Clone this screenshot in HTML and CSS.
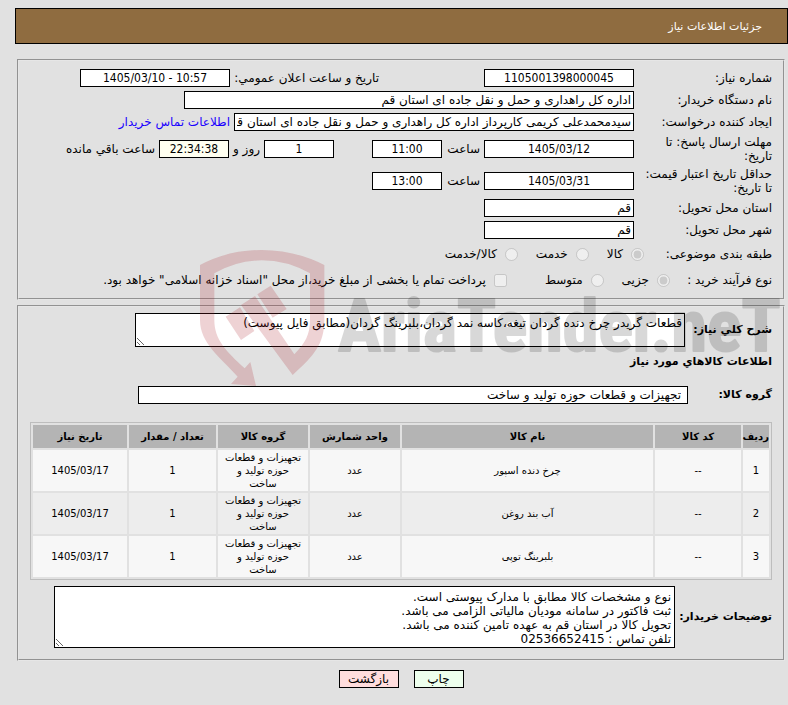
FILE: index.html
```html
<!DOCTYPE html>
<html lang="fa" dir="rtl">
<head>
<meta charset="utf-8">
<title>جزئیات اطلاعات نیاز</title>
<link rel="stylesheet" href="styles.css">
</head>
<body>
<header class="title-bar"><h1>جزئیات اطلاعات نیاز</h1></header>
<main>
<section class="panel summary">
  <div class="row">
    <label class="name" for="need-no">شماره نیاز:</label>
    <input class="field date" id="need-no" value="1105001398000045" readonly>
    <label class="announce" for="announce">تاريخ و ساعت اعلان عمومي:</label>
    <input class="field date" id="announce" dir="ltr" value="1405/03/10 - 10:57" readonly>
  </div>
  <div class="row">
    <label class="name" for="org">نام دستگاه خریدار:</label>
    <input class="field org" id="org" value="اداره کل راهداری و حمل و نقل جاده ای استان قم" readonly>
  </div>
  <div class="row">
    <label class="name" for="creator">ایجاد کننده درخواست:</label>
    <input class="field creator" id="creator" value="سیدمحمدعلی کریمی کارپرداز اداره کل راهداری و حمل و نقل جاده ای استان قم" readonly>
    <a class="contact" href="#contact">اطلاعات تماس خریدار</a>
  </div>
  <div class="row tall">
    <label class="name" for="deadline">مهلت ارسال پاسخ: تا تاریخ:</label>
    <input class="field date" id="deadline" value="1405/03/12" readonly>
    <label class="unit" for="deadline-h">ساعت</label>
    <input class="field time" id="deadline-h" value="11:00" readonly>
    <input class="field time days" id="days" value="1" readonly>
    <label class="unit" for="days">روز و</label>
    <input class="field time left" id="left" value="22:34:38" readonly>
    <label for="left">ساعت باقي مانده</label>
  </div>
  <div class="row tall">
    <label class="name" for="valid">حداقل تاریخ اعتبار قیمت: تا تاریخ:</label>
    <input class="field date" id="valid" value="1405/03/31" readonly>
    <label class="unit" for="valid-h">ساعت</label>
    <input class="field time" id="valid-h" value="13:00" readonly>
  </div>
  <div class="row">
    <label class="name" for="province">استان محل تحویل:</label>
    <input class="field place" id="province" value="قم" readonly>
  </div>
  <div class="row">
    <label class="name" for="city">شهر محل تحویل:</label>
    <input class="field place" id="city" value="قم" readonly>
  </div>
  <div class="row choices" role="radiogroup" aria-label="طبقه بندی موضوعی">
    <span class="name">طبقه بندی موضوعی:</span>
    <input type="radio" name="kind" id="k1" checked disabled><label for="k1">کالا</label>
    <input type="radio" name="kind" id="k2" disabled><label for="k2">خدمت</label>
    <input type="radio" name="kind" id="k3" disabled><label for="k3">کالا/خدمت</label>
  </div>
  <div class="row choices process">
    <span class="name">نوع فرآیند خرید :</span>
    <input type="radio" name="size" id="s1" checked disabled><label for="s1">جزیی</label>
    <input type="radio" name="size" id="s2" disabled><label class="last" for="s2">متوسط</label>
    <input type="checkbox" id="pay" disabled><label for="pay">پرداخت تمام یا بخشی از مبلغ خرید،از محل "اسناد خزانه اسلامی" خواهد بود.</label>
  </div>
</section>
<section class="panel details">
  <div class="line">
    <label class="strong brief-label" for="summary">شرح کلي نياز:</label>
    <textarea class="field area brief" id="summary" readonly>قطعات گریدر چرخ دنده گردان تیغه،کاسه نمد گردان،بلبرینگ گردان(مطابق فایل پیوست)</textarea>
  </div>
  <h2 class="strong">اطلاعات کالاهاي مورد نياز</h2>
  <div class="line group">
    <label class="strong" for="group">گروه کالا:</label>
    <input class="field" id="group" value="تجهیزات و قطعات حوزه تولید و ساخت" readonly>
  </div>
  <table>
    <colgroup><col class="c-row"><col class="c-code"><col><col class="c-mid"><col class="c-mid"><col class="c-qty"><col class="c-date"></colgroup>
    <thead><tr><th>ردیف</th><th>کد کالا</th><th>نام کالا</th><th>واحد شمارش</th><th>گروه کالا</th><th>تعداد / مقدار</th><th>تاریخ نیاز</th></tr></thead>
    <tbody>
      <tr><td>1</td><td>--</td><td>چرخ دنده اسپور</td><td>عدد</td><td>تجهیزات و قطعات حوزه تولید و ساخت</td><td>1</td><td>1405/03/17</td></tr>
      <tr><td>2</td><td>--</td><td>آب بند روغن</td><td>عدد</td><td>تجهیزات و قطعات حوزه تولید و ساخت</td><td>1</td><td>1405/03/17</td></tr>
      <tr><td>3</td><td>--</td><td>بلبرینگ توپی</td><td>عدد</td><td>تجهیزات و قطعات حوزه تولید و ساخت</td><td>1</td><td>1405/03/17</td></tr>
    </tbody>
  </table>
  <div class="line notes">
    <label class="strong" for="notes">توضیحات خریدار:</label>
    <textarea class="field area" id="notes" readonly>نوع و مشخصات کالا مطابق با مدارک پیوستی است.
ثبت فاکتور در سامانه مودیان مالیاتی الزامی می باشد.
تحویل کالا در استان قم به عهده تامین کننده می باشد.
تلفن تماس : 02536652415</textarea>
  </div>
</section>
<div class="actions"><button class="print" type="button">چاپ</button><button class="back" type="button">بازگشت</button></div>
</main>
<svg class="watermark" width="588" height="140" viewBox="200 248 588 140">
  <g class="shield" transform="translate(190 240) scale(.3333)">
    <path d="M30 75Q115 30 215 30Q315 30 403 75V240C403 310 375 345 308 405L153 195L195 168L313 343C345 310 360 285 360 240V100Q290 61 215 61Q140 61 73 100V240C73 300 110 335 164 385L181 366L198 438L123 432L143 410C90 350 30 310 30 240Z"/>
    <path d="M107 230L150 202L193 273L153 300ZM202 163L242 137L290 207L248 233Z"/>
  </g>
  <text class="brand" x="338" y="351">AriaTender.neT</text>
</svg>
</body>
</html>
```
FILE: styles.css
```css
* { box-sizing: border-box; }
body {
  position: relative;
  margin: 0;
  padding: 8px 0 18px;
  background: #e1e1e1;
  color: #000;
  font: 12px/14px "DejaVu Sans", sans-serif;
}
.title-bar {
  margin-left: 15px;
  padding: 11px 25px 9px;
  border: 1px solid #000;
  background: #8f6c40;
  color: #fff;
}
.title-bar h1 { margin: 0; font-size: 11px; font-weight: 400; line-height: 14px; }
main { margin: 15px 3px 0 17px; }
.panel { border: 2px groove #e6e6e6; }
.summary { padding: 6px 11px 5px; }
.row { display: flex; align-items: center; min-height: 22px; gap: 4px; white-space: nowrap; }
.row.tall { min-height: 32px; }
.name { flex: 0 0 134px; padding-left: 4px; white-space: normal; }
.field {
  height: 18px;
  margin: 0;
  padding: 0 2px;
  border: 1px solid #000;
  border-radius: 0;
  background: #fff;
  color: #000;
  font: inherit;
}
.date, .time { font: 12px/14px "DejaVu Sans Condensed", "DejaVu Sans", sans-serif; text-align: center; }
.date { width: 150px; }
.time { width: 70px; }
.place { width: 150px; }
.org { width: 450px; }
.creator { width: 400px; }
.announce { margin-right: 101px; flex: 0 0 145px; }
.days { margin-right: 34px; }
.unit { flex: 0 0 34px; }
.days + .unit { flex-basis: 26px; }
.left { background: #fffff0; }
.contact { color: #1a00ff; text-decoration: none; }
.choices { min-height: 26px; gap: 0; }
.choices input { width: 13px; height: 13px; margin: 0; }
.choices label { margin: 0 8px 0 18px; }
.choices .last { margin-left: 38px; }
.choices .name { flex-basis: 128px; }
.process .name { flex-basis: 102px; }
.details { margin-top: 5px; padding: 6px 11px 11px; }
.strong { margin: 0; font-size: 11px; font-weight: 700; line-height: 14px; white-space: nowrap; }
.line { display: flex; align-items: center; gap: 4px; }
.area { height: 34px; padding: 2px; line-height: 14px; resize: both; overflow: hidden; }
.brief-label { flex: 0 0 83px; }
.brief { width: 550px; }
h2.strong { margin-top: 8px; }
.group { margin-top: 17px; }
.group .strong { flex: 0 0 80px; }
.group .field { width: 550px; padding: 0 6px; }
table {
  width: 100%;
  margin: 18px 0 6px;
  border: 1px solid #bdbdbd;
  border-spacing: 2px;
  table-layout: fixed;
  font-size: 10px;
  line-height: 13px;
  text-align: center;
}
th { height: 23px; padding: 0; background: #b4b4b4; }
td { height: 41px; padding: 1px 5px; background: #f7f7f7; }
tr:nth-child(even) td { background: #ededed; }
.c-row { width: 26px; }
.c-code { width: 86px; }
.c-mid { width: 90px; }
.c-qty { width: 87px; }
.c-date { width: 94px; }
.notes .area { width: 621px; height: 62px; padding: 3px; }
.actions { display: flex; justify-content: center; gap: 15px; margin-top: 9px; }
.actions button { height: 18px; padding: 0; border: 1px solid #000; color: #000; font: inherit; }
.print { width: 50px; background: #edffed; }
.back { width: 60px; background: #ffdddd; }
.watermark { position: absolute; top: 248px; right: 0; pointer-events: none; }
.shield { fill: #a81c26; fill-opacity: .2; }
.brand {
  font: 700 72px "Liberation Sans Narrow", "Roboto Condensed", Roboto, sans-serif;
  fill: #000;
  stroke: #000;
  stroke-width: 2px;
  stroke-linejoin: round;
  opacity: .15;
  direction: ltr;
}
```
